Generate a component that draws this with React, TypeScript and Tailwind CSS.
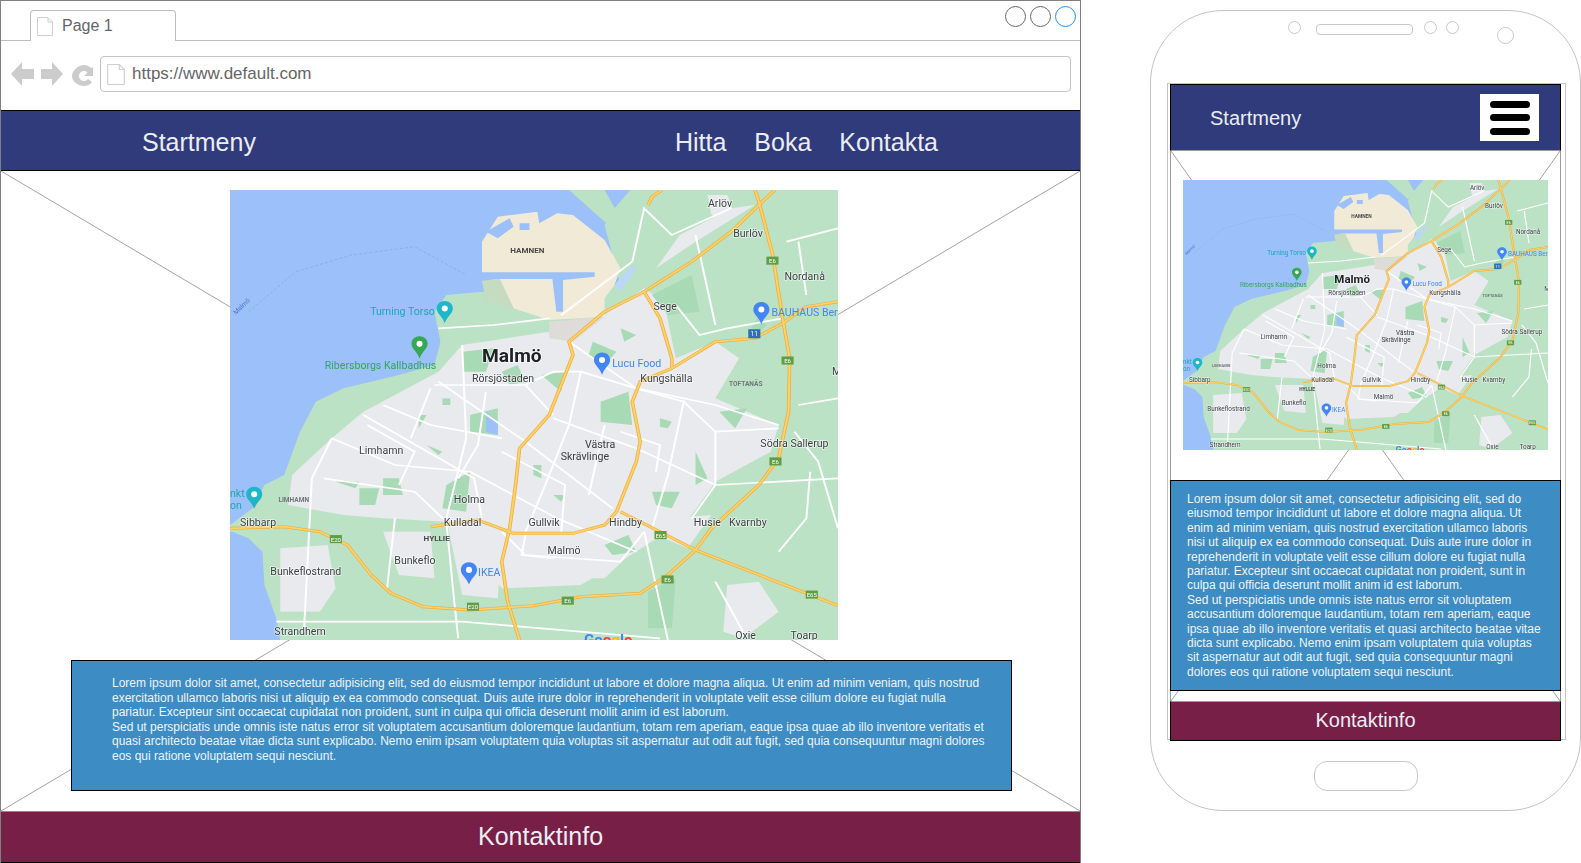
const LOREM_A =
  "Lorem ipsum dolor sit amet, consectetur adipisicing elit, sed do eiusmod tempor incididunt ut labore et dolore magna aliqua. Ut enim ad minim veniam, quis nostrud exercitation ullamco laboris nisi ut aliquip ex ea commodo consequat. Duis aute irure dolor in reprehenderit in voluptate velit esse cillum dolore eu fugiat nulla pariatur. Excepteur sint occaecat cupidatat non proident, sunt in culpa qui officia deserunt mollit anim id est laborum.";
const LOREM_B =
  "Sed ut perspiciatis unde omnis iste natus error sit voluptatem accusantium doloremque laudantium, totam rem aperiam, eaque ipsa quae ab illo inventore veritatis et quasi architecto beatae vitae dicta sunt explicabo. Nemo enim ipsam voluptatem quia voluptas sit aspernatur aut odit aut fugit, sed quia consequuntur magni dolores eos qui ratione voluptatem sequi nesciunt.";

// Map labels: x, y, text
const LABELS: [number, number, string][] = [
  [474, 17, "Arlöv"], [499, 47, "Burlöv"], [550, 89, "Nordanå"], [420, 119, "Sege"],
  [240, 190, "Rörsjöstaden"], [407, 190, "Kungshälla"], [128, 262, "Limhamn"],
  [526, 255, "Södra Sallerup"], [222, 310, "Holma"], [10, 333, "Sibbarp"],
  [212, 333, "Kulladal"], [296, 333, "Gullvik"], [376, 333, "Hindby"], [460, 333, "Husie"],
  [495, 333, "Kvarnby"], [315, 361, "Malmö"], [163, 371, "Bunkeflo"], [40, 382, "Bunkeflostrand"],
  [44, 441, "Strandhem"], [501, 445, "Oxie"], [556, 445, "Toarp"], [597, 183, "M"],
];

const SHIELDS: [number, number, string][] = [
  [538, 70, "E6"], [553, 169, "E6"], [541, 269, "E6"], [427, 342, "E65"], [434, 386, "E6"],
  [335, 407, "E6"], [241, 413, "E20"], [105, 346, "E20"], [577, 401, "E65"],
];

const ROADS = [
  "M13 1030L150 1025L240 1040L310 1080L370 1170L420 1225L500 1265L620 1275L780 1262L900 1235L1050 1225L1120 1170L1190 1095L1230 1030L1350 900L1400 820L1425 680L1428 520L1410 400L1385 210L1350 50L1340 15",
  "M1550 1262L1330 1160L1190 1095L1100 1040L1000 980",
  "M990 980L960 1020L880 1045L730 1045L640 1005L520 1025",
  "M990 980L1040 830L1050 770L1030 650L1050 590L1130 550L1240 470L1340 460L1410 415L1470 365L1550 350",
  "M745 1365L715 1250L700 1130L720 1030L735 900L745 790L820 690L880 510L870 470L960 380L1060 320L1180 230L1280 140L1350 60L1390 15",
  "M1060 320L1100 400L1130 520L1130 550",
  "M1070 60L1080 35L1105 15",
];

const STREETS = [
  "M270 760L430 840L620 860L840 1000L1040 1100",
  "M540 590L760 770L980 970",
  "M350 690L630 880L650 1000",
  "M870 470L1040 610L1240 660L1400 720",
  "M600 480L610 760L560 1000",
  "M250 880L480 920L560 1010",
  "M830 700L1040 790L1240 900L1550 880",
  "M200 1340L220 880L270 760",
  "M530 600L760 600L830 690",
  "M1040 610L1160 650L1120 870L1080 1030",
  "M1030 230L1060 70L1130 150L1280 70",
  "M1190 150L1240 420",
  "M1420 170L1550 130",
  "M850 390L1030 230",
  "M700 800L860 900L850 1050",
  "M130 1310L600 1310L1100 1360",
  "M1060 1040L1120 1365",
  "M700 1040L760 1110L1000 1130L1060 1040",
  "M1440 740L1500 830L1550 1030",
  "M400 660L520 720L700 760",
  "M360 720L480 800L440 900",
  "M520 610L470 760",
  "M660 620L640 780L590 880",
  "M760 600L830 560L900 560L1040 610",
  "M900 560L870 720L810 900L760 1040",
  "M960 720L920 930",
  "M1000 740L1100 780L1090 860",
  "M560 1010L580 1250L590 1360",
  "M430 1000L410 1210",
  "M760 1050L750 1110L830 1120",
  "M1240 740L1240 900L1180 1000",
  "M1160 650L1240 740L1400 730",
  "M1140 360L1200 450L1270 430L1410 400",
  "M1450 170L1470 330",
  "M540 430L680 420L820 400",
  "M1240 1190L1310 1340",
  "M1480 860L1470 1000L1400 1100",
  "M1550 640L1450 660",
];

const URBAN = [
  "M170 870L270 760L350 680L540 560L600 480L820 440L960 390L1060 310L1110 350L1140 520L1240 470L1300 520L1240 640L1400 720L1380 800L1240 890L1180 990L1040 1100L900 1200L700 1210L560 1010L400 1000L300 990L160 960Z",
  "M1090 250L1150 150L1280 70L1340 60L1190 170Z",
  "M1220 30L1270 30L1290 90L1230 90Z",
  "M140 1090L260 1080L280 1210L240 1280L140 1280Z",
  "M1270 1200L1350 1190L1400 1280L1310 1360L1260 1340Z",
  "M400 1040L520 1040L530 1180L440 1170Z",
  "M560 1000L700 1060L690 1240L600 1230Z",
  "M760 1060L1040 1090L960 1180L800 1180Z",
  "M1120 1000L1230 990L1170 1090L1110 1060Z",
];

const PARKS = [
  "M1080 330L1180 270L1200 380L1120 390Z", "M950 650L1020 620L1030 720L950 710Z",
  "M620 690L690 670L690 750L620 740Z", "M800 570L860 560L850 620Z", "M1250 680L1320 670L1290 730Z",
  "M560 900L620 860L610 980L550 970Z", "M400 880L440 880L450 930L400 930Z", "M280 890L340 890L330 910Z",
  "M1080 920L1150 920L1130 970L1090 960Z", "M960 1080L1020 1050L1040 1100L980 1110Z", "M780 840L800 840L800 880L780 870Z",
  "M830 930L860 930L850 950Z", "M510 780L550 800L540 810Z", "M1000 430L1040 450L1010 470Z", "M490 690L510 690L490 730Z",
  "M1070 1220L1140 1180L1130 1330L1070 1330Z", "M1190 800L1220 880L1190 900Z", "M550 640L570 640L570 660L550 660Z",
  "M600 500L680 490L660 560L600 560Z", "M700 560L740 540L760 590L720 600Z", "M340 910L390 910L380 960L340 960Z",
  "M1100 700L1130 710L1120 730L1100 725Z", "M930 470L990 500L960 540L920 510Z", "M1330 430L1345 400L1370 420L1350 440Z",
];

function Pin({ x, y, fill }: { x: number; y: number; fill: string }) {
  return (
    <g transform={`translate(${x} ${y})`}>
      <path d="M0 -11C-5.500 -11 -8 -7 -8 -3.500C-8 1.500 -2.500 4 0 11C2.500 4 8 1.500 8 -3.500C8 -7 5.500 -11 0 -11Z" fill={fill} />
      <circle cx="0" cy="-3.500" r="3" fill="#fff" />
    </g>
  );
}

function MapImage({ className }: { className: string }) {
  return (
    <svg
      viewBox="0 0 603 446"
      preserveAspectRatio="none"
      className={className}
      fontFamily="Roboto, sans-serif"
    >
      <rect width="603" height="446" fill="#bce2c5" />
      <g transform="scale(0.3923 0.3304) translate(-13 -15)">
        <path
          d="M13 15L1025 15L985 70L960 120L1000 300L650 320L560 330L530 380L545 470L530 540L440 570L300 610L230 650L190 740L150 870L100 900L70 970L13 1020Z"
          fill="#9cc0f9"
        />
        <path d="M13 1038L60 1060L95 1100L100 1200L130 1300L140 1365L13 1365Z" fill="#9cc0f9" />
        <path d="M870 15L960 15L1000 100L1000 130L960 110Z" fill="#bce2c5" />
        <path
          d="M650 170L690 95L790 80L795 115L840 85L880 90L960 165L1000 250L985 300L960 340L960 395L820 405L730 370L695 285L650 285Z"
          fill="#f1ead6"
        />
        <path d="M640 262L935 262L935 275L855 285L855 380L838 380L828 282L695 282L650 287Z" fill="#9cc0f9" />
        <path d="M660 140L720 100L730 125L690 160Z M745 115L770 115L770 135L745 135Z" fill="#9cc0f9" />
        <path d="M650 287L695 282L730 370L660 350Z" fill="#c6dcc0" />
        <path d="M985 300L1030 240L1040 250L1000 320" fill="#bcd6f8" />
        {URBAN.map((d) => <path key={d} d={d} fill="#e8eaed" />)}
        <path d="M820 410L960 395L880 470L820 460Z" fill="#dddcd8" />
        {PARKS.map((d) => <path key={d} d={d} fill="#a8dab5" />)}
        <path d="M660 680L690 710L690 750L660 740Z" fill="#9cc0f9" />
        <path d="M60 380L180 260L320 210L480 185L610 270" fill="none" stroke="#7faaf0" strokeWidth="2" strokeDasharray="8 5" />
        {STREETS.map((d) => <path key={d} d={d} fill="none" stroke="#fff" strokeWidth="5" />)}
        {ROADS.map((d) => <path key={d} d={d} fill="none" stroke="#f0ad3c" strokeWidth="9" strokeLinejoin="round" />)}
        {ROADS.map((d) => <path key={d + "i"} d={d} fill="none" stroke="#fcd26a" strokeWidth="5" strokeLinejoin="round" />)}
      </g>

      {SHIELDS.map(([x, y, t]) => (
        <g key={`${x}-${y}`}>
          <rect x={x - 6} y={y - 4} width="12" height="8" fill="#5f9e45" />
          <text x={x} y={y + 2.500} fontSize="6" fill="#fff" textAnchor="middle">{t}</text>
        </g>
      ))}
      <rect x="514" y="138" width="12" height="9" fill="#2f6fb5" />
      <text x="520" y="145" fontSize="6.500" fill="#fff" textAnchor="middle">11</text>

      {LABELS.map(([x, y, t]) => (
        <text key={`${x}-${t}`} x={x} y={y} fontSize="10.500" fill="#3c4043" stroke="#fff" strokeWidth="1.500" strokeOpacity="0.6" paintOrder="stroke">{t}</text>
      ))}
      <text x="250" y="170" fontSize="19" fontWeight="700" fill="#202124" stroke="#fff" strokeWidth="2" strokeOpacity="0.6" paintOrder="stroke">Malmö</text>
      <text x="352" y="256" fontSize="10.500" fill="#3c4043">Västra</text>
      <text x="328" y="268" fontSize="10.500" fill="#3c4043">Skrävlinge</text>
      <text x="278" y="62" fontSize="8" fontWeight="700" fill="#4a4a4a">HAMNEN</text>
      <text x="495" y="194" fontSize="6.500" fontWeight="700" fill="#70757a">TOFTANÄS</text>
      <text x="48" y="309" fontSize="6.500" fontWeight="700" fill="#70757a">LIMHAMN</text>
      <text x="192" y="348" fontSize="8" fontWeight="700" fill="#4a4a4a">HYLLIE</text>
      <text x="139" y="124" fontSize="10.500" fill="#1ea7b8">Turning Torso</text>
      <text x="94" y="177" fontSize="10.500" fill="#34a853">Ribersborgs Kallbadhus</text>
      <text x="379" y="175" fontSize="10.500" fill="#4285f4">Lucu Food</text>
      <text x="537" y="125" fontSize="10.500" fill="#4285f4">BAUHAUS Ber</text>
      <text x="246" y="383" fontSize="10.500" fill="#4285f4">IKEA</text>
      <text x="0" y="304" fontSize="10.500" fill="#1ea7b8">nkt</text>
      <text x="0" y="316" fontSize="10.500" fill="#1ea7b8">on</text>
      <text x="6" y="124" fontSize="6.500" fill="#4a78c8" transform="rotate(-45 6 124)">Malmö</text>
      <text x="351" y="451" fontSize="15" fontWeight="700" fill="#4285f4">Go<tspan fill="#ea4335">o</tspan><tspan fill="#fbbc05">g</tspan>l<tspan fill="#ea4335">e</tspan></text>

      <Pin x={213} y={121} fill="#1fb6c9" />
      <Pin x={188} y={156} fill="#34a853" />
      <Pin x={369} y={172} fill="#4285f4" />
      <Pin x={527} y={122} fill="#4285f4" />
      <Pin x={237} y={380} fill="#4285f4" />
      <Pin x={24} y={305} fill="#1fb6c9" />
    </svg>
  );
}

// Placeholder cross behind the page content
function Cross() {
  return (
    <svg className="absolute inset-0 h-full w-full" preserveAspectRatio="none" viewBox="0 0 100 100">
      <path d="M0 0L100 100M100 0L0 100" stroke="#a3a3a3" strokeWidth="1" vectorEffect="non-scaling-stroke" fill="none" />
    </svg>
  );
}

function DocIcon({ className }: { className: string }) {
  return (
    <svg viewBox="0 0 16 19" className={className} fill="none" stroke="#cfcfcf" strokeWidth="1">
      <path d="M0.500 0.500H11L15.500 5V18.500H0.500Z" />
      <path d="M11 0.500V5H15.500" />
    </svg>
  );
}

function WindowDot({ className }: { className: string }) {
  return <div className={`h-[21px] w-[21px] rounded-full border ${className}`} />;
}

function Browser() {
  return (
    <div className="flex h-[863px] w-[1081px] shrink-0 flex-col border-x border-t border-[#808080] bg-white">
      {/* Tab strip */}
      <div className="flex h-[40px] shrink-0 items-end justify-between border-b border-[#bdbdbd] pl-[29px]">
        <div className="-mb-px flex h-[31px] w-[146px] items-center rounded-t-[4px] border-x border-t border-[#bdbdbd] bg-white pl-[6px]">
          <DocIcon className="h-[19px] w-[16px]" />
          <span className="ml-[9px] text-[16px] text-[#666666]">Page 1</span>
        </div>
        <div className="mb-[13px] mr-[4px] flex gap-[4px]">
          <WindowDot className="border-[#666666]" />
          <WindowDot className="border-[#666666]" />
          <WindowDot className="border-[#1e90ff]" />
        </div>
      </div>

      {/* Address row */}
      <div className="flex h-[69px] shrink-0 items-center pb-[3px] pl-[10px] pr-[9px]">
        <svg viewBox="0 0 84 24" className="h-[24px] w-[84px]" fill="#cccccc">
          <path d="M0 12L11 0V7H23V17H11V24Z" />
          <path d="M52 12L41 0V7H30V17H41V24Z" />
          <path d="M82 5V14H73L76.500 10.500C75.500 9.500 74.300 9 73 9C70.200 9 68 11.200 68 14C68 16.800 70.200 19 73 19C74.600 19 76 18.300 77 17L81 20C79.100 22.500 76.200 24 73 24C67.500 24 61 19.500 61 14C61 8.500 67.500 3 73 3C75.800 3 78.300 4.100 80 6Z" />
        </svg>
        <div className="ml-[5px] flex h-[36px] flex-1 items-center rounded-[4px] border border-[#c4c4c4] pl-[6px]">
          <DocIcon className="h-[21px] w-[18px]" />
          <span className="ml-[7px] text-[17px] text-[#666666]">https://www.default.com</span>
        </div>
      </div>

      {/* Nav */}
      <div className="flex h-[61px] shrink-0 items-center border-y border-black bg-[#2f3b7b] pl-[141px] pt-[5px] text-[25px] text-[#ecedf3]">
        <span>Startmeny</span>
        <div className="ml-[419px] flex gap-[28px]">
          <span>Hitta</span>
          <span>Boka</span>
          <span>Kontakta</span>
        </div>
      </div>

      {/* Body */}
      <div className="relative flex flex-1 flex-col">
        <Cross />
        <MapImage className="relative ml-[229px] mt-[19px] h-[450px] w-[608px] blur-[0.5px]" />
        <div className="relative ml-[70px] mt-[20px] h-[131px] w-[941px] border border-black bg-[#3d8cc4] pl-[40px] pr-[24px] pt-[15px] text-[12px] leading-[14.5px] text-[#eef4f9]">
          <p>{LOREM_A}</p>
          <p>{LOREM_B}</p>
        </div>
      </div>

      {/* Footer */}
      <div className="flex h-[52px] shrink-0 items-center justify-center border-y border-t-[#8a8a8a] border-b-black bg-[#771f47] text-[25px] text-[#ecedf3]">
        Kontaktinfo
      </div>
    </div>
  );
}

function Sensor({ className }: { className: string }) {
  return <div className={`rounded-full border border-[#c8c8c8] ${className}`} />;
}

function Phone() {
  return (
    <div className="ml-[69px] mt-[10px] flex h-[801px] w-[431px] shrink-0 flex-col rounded-[73px] border border-[#c4c4c4] bg-white">
      {/* Earpiece and sensors */}
      <div className="flex h-[72px] shrink-0 items-start pl-[137px]">
        <Sensor className="mt-[10px] h-[13px] w-[13px]" />
        <div className="ml-[15px] mt-[13px] h-[11px] w-[97px] rounded-[4px] border border-[#c8c8c8]" />
        <Sensor className="ml-[11px] mt-[10px] h-[13px] w-[13px]" />
        <Sensor className="ml-[9px] mt-[10px] h-[13px] w-[13px]" />
        <Sensor className="ml-[38px] mt-[16px] h-[17px] w-[17px]" />
      </div>

      {/* Screen */}
      <div className="ml-[16px] h-[657px] w-[399px] shrink-0 border border-[#c4c4c4] pl-[2px] pr-[4px]">
        <div className="flex h-[657px] w-[391px] flex-col">
          <div className="flex h-[67px] shrink-0 items-center justify-between border border-black border-b-[#9a9a9a] bg-[#2f3b7b] pl-[39px] pr-[21px] text-[20px] text-[#ecedf3]">
            <span>Startmeny</span>
            <div className="flex h-[47px] w-[59px] flex-col items-center justify-center gap-[6.500px] bg-white">
              <div className="h-[7px] w-[40px] rounded-full bg-black" />
              <div className="h-[7px] w-[40px] rounded-full bg-black" />
              <div className="h-[7px] w-[40px] rounded-full bg-black" />
            </div>
          </div>
          <div className="relative flex flex-1 flex-col border-x border-[#9a9a9a]">
            <Cross />
            <MapImage className="relative ml-[12px] mt-[29px] h-[270px] w-[365px] blur-[0.5px]" />
            <div className="relative -mx-px mt-[30px] h-[211px] border border-black bg-[#3d8cc4] px-[16px] pt-[11px] text-[12px] leading-[14.4px] text-[#eef4f9]">
              <p>{LOREM_A}</p>
              <p>{LOREM_B}</p>
            </div>
          </div>
          <div className="flex h-[40px] shrink-0 items-center justify-center border border-black border-t-[#9a9a9a] bg-[#771f47] pb-[2px] text-[20px] text-[#ecedf3]">
            Kontaktinfo
          </div>
        </div>
      </div>

      {/* Home button */}
      <div className="mx-auto mt-[21px] h-[30px] w-[104px] rounded-[13px] border border-[#c8c8c8]" />
    </div>
  );
}

export default function App() {
  return (
    <div className="flex h-[863px] w-[1581px] overflow-hidden bg-white font-['Liberation_Sans',Arial,sans-serif]">
      <Browser />
      <Phone />
    </div>
  );
}
